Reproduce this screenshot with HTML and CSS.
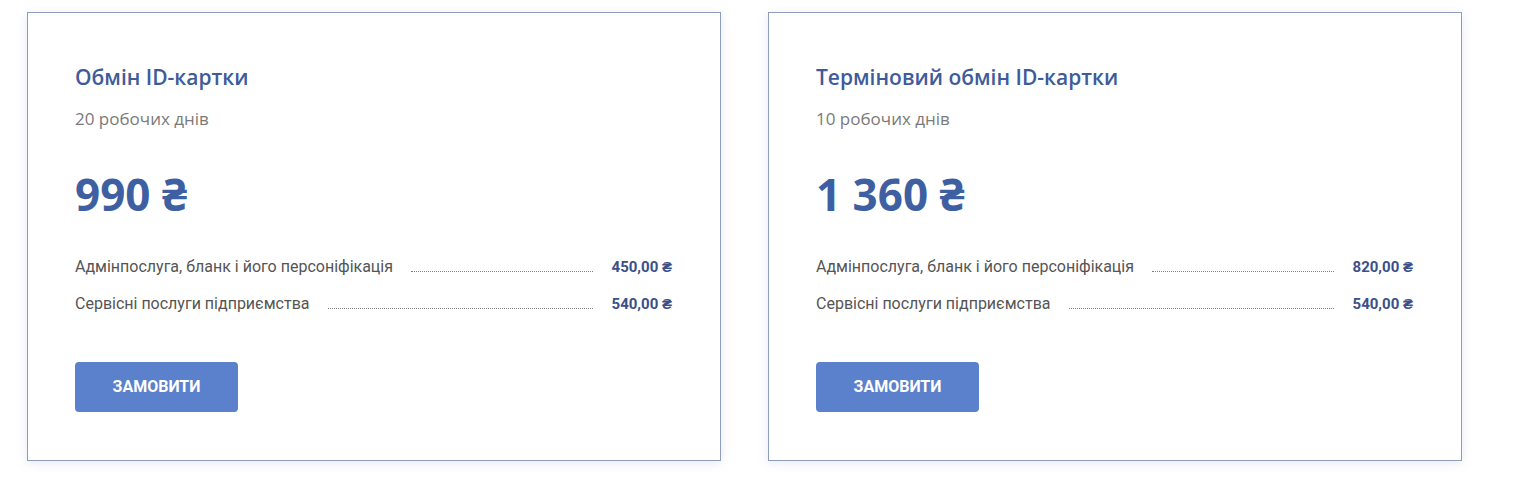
FILE: index.html
```html
<!DOCTYPE html>
<html lang="uk">

<head>
    <meta charset="UTF-8">
    <meta name="viewport" content="width=device-width, initial-scale=1.0">
    <title>Обмін ID-картки</title>
    <link rel="stylesheet" href="styles.css">
</head>

<body>
    <div class="tariffs">
        <div class="card">
            <div class="card-title">Обмін ID-картки</div>
            <div class="card-term">20 робочих днів</div>
            <div class="card-price">990 ₴</div>
            <div class="rows">
                <div class="row">
                    <span class="row-name">Адмінпослуга, бланк і його персоніфікація</span>
                    <span class="row-dots"></span>
                    <span class="row-sum">450,00 ₴</span>
                </div>
                <div class="row">
                    <span class="row-name">Сервісні послуги підприємства</span>
                    <span class="row-dots"></span>
                    <span class="row-sum">540,00 ₴</span>
                </div>
            </div>
            <div class="order-btn">ЗАМОВИТИ</div>
        </div>

        <div class="card">
            <div class="card-title">Терміновий обмін ID-картки</div>
            <div class="card-term">10 робочих днів</div>
            <div class="card-price">1 360 ₴</div>
            <div class="rows">
                <div class="row">
                    <span class="row-name">Адмінпослуга, бланк і його персоніфікація</span>
                    <span class="row-dots"></span>
                    <span class="row-sum">820,00 ₴</span>
                </div>
                <div class="row">
                    <span class="row-name">Сервісні послуги підприємства</span>
                    <span class="row-dots"></span>
                    <span class="row-sum">540,00 ₴</span>
                </div>
            </div>
            <div class="order-btn">ЗАМОВИТИ</div>
        </div>
    </div>
</body>

</html>
```

FILE: styles.css
```css
* {
    box-sizing: border-box;
}

body {
    margin: 0px;
    padding: 0px;
    background-color: #ffffff;
    font-family: "Open Sans", "Noto Sans", sans-serif;
}

.tariffs {
    display: flex;
    gap: 47px;
    padding: 12px 27px;
}

.card {
    width: 694px;
    height: 449px;
    border: 1px solid #8d9dbb;
    box-shadow: 0 2px 10px rgba(120, 140, 190, 0.18);
    padding: 51px 48px 48px 47px;
    display: flex;
    flex-direction: column;
    align-items: flex-start;
}

.card-title {
    font-size: 21px;
    font-weight: 600;
    color: #3f5b9a;
    line-height: 26px;
}

.card-term {
    margin-top: 18px;
    font-size: 17px;
    color: #7a7a7a;
    line-height: 22px;
}

.card-price {
    margin-top: 36px;
    font-size: 44px;
    font-weight: 700;
    color: #3f5fa3;
    line-height: 56px;
}

.rows {
    width: 100%;
    margin-top: 35px;
}

.row {
    display: flex;
    align-items: baseline;
    height: 37px;
    font-family: Roboto, "Liberation Sans", sans-serif;
    font-size: 16px;
    color: #555555;
}

.row-name {
    white-space: nowrap;
}

.row-dots {
    flex: 1;
    margin: 0 19px 0 18px;
    border-bottom: 1px dotted #7f7f7f;
}

.row-sum {
    font-size: 15px;
    font-weight: 700;
    color: #3b5088;
}

.order-btn {
    margin-top: 31px;
    width: 163px;
    height: 50px;
    line-height: 50px;
    text-align: center;
    background-color: #5b80cc;
    border-radius: 4px;
    color: #ffffff;
    font-family: Roboto, "Liberation Sans", sans-serif;
    font-size: 16px;
    font-weight: 700;
    cursor: pointer;
}
```
